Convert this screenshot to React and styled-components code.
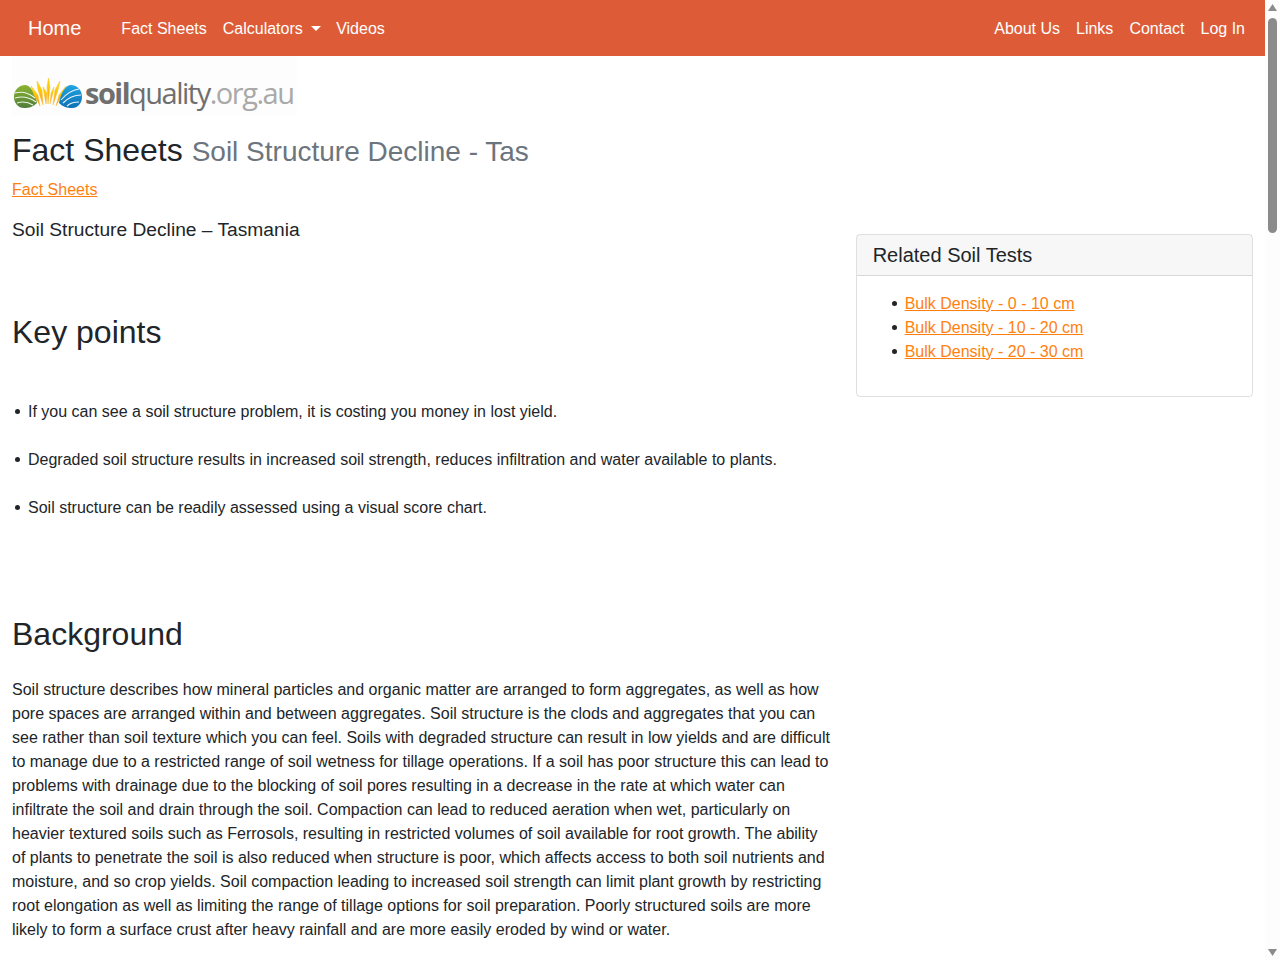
import React from 'react';
import styled, { createGlobalStyle } from 'styled-components';

const Global = createGlobalStyle`
  body {
    margin: 0;
    font-family: "Liberation Sans", Arial, sans-serif;
    font-size: 16px;
    line-height: 24px;
    color: #212529;
    background: #fff;
  }
`;

const Shell = styled.div`
  display: flex;
  height: 100vh;
  overflow: hidden;
`;

const Viewport = styled.div`
  flex: 1;
  min-width: 0;
`;

const ScrollTrack = styled.div`
  flex: 0 0 15px;
  display: flex;
  flex-direction: column;
  align-items: center;
  padding: 4px 0;
  box-sizing: border-box;
  background: #fdfdfd;
`;

const ScrollThumb = styled.div`
  width: 9px;
  height: 215px;
  margin-top: 7px;
  margin-bottom: auto;
  border-radius: 5px;
  background: #8b8b8b;
`;

const Navbar = styled.nav`
  display: flex;
  align-items: center;
  justify-content: space-between;
  height: 56px;
  box-sizing: border-box;
  padding: 8px 12px;
  background: #dd5c37;
`;

const NavGroup = styled.div`
  display: flex;
  align-items: center;
`;

const Brand = styled.a`
  padding: 0 16px;
  margin-right: 16px;
  font-size: 20px;
  line-height: 30px;
  color: #fff;
`;

const NavLink = styled.a`
  padding: 9px 8px 7px;
  color: #fff;
`;

const Caret = styled.span`
  display: inline-block;
  margin-left: 8px;
  margin-right: -0.6px;
  vertical-align: 3px;
  border-top: 5px solid #fff;
  border-left: 5px solid transparent;
  border-right: 5px solid transparent;
`;

const Page = styled.main`
  padding: 0 12px;
`;

const LogoBox = styled.div`
  display: flex;
  align-items: center;
  gap: 3px;
  width: 285px;
  height: 60px;
  padding: 14px 0 0 2px;
  box-sizing: border-box;
  background: #fdfdfd;
`;

const LogoName = styled.span`
  font-family: "Open Sans", sans-serif;
  font-size: 29px;
  line-height: 32px;
  letter-spacing: -1.5px;
  color: #6f6f6f;
`;

const LogoStrong = styled.span`
  font-weight: 700;
`;

const LogoFade = styled.span`
  color: #a9a9a9;
`;

const Title = styled.h2`
  margin: 15px 0 7px;
  font-size: 32px;
  line-height: 38px;
  font-weight: 500;
`;

const TitleSmall = styled.small`
  font-size: 28px;
  font-weight: 400;
  color: #6c757d;
`;

const OrangeLink = styled.a`
  color: #ff7f0f;
  text-decoration: underline;
`;

const Columns = styled.div`
  display: grid;
  grid-template-columns: 819.67px 397.33px;
  gap: 24px;
  margin-top: 16px;
`;

const Lead = styled.p`
  margin: 0;
  font-size: 19.2px;
  line-height: 24px;
`;

const SectionTitle = styled.h2`
  margin: ${(p) => p.$top}px 0 0;
  font-size: 32px;
  line-height: 38px;
  font-weight: 500;
`;

const Bullet = styled.li`
  list-style: none;
  &::before {
    content: "";
    display: inline-block;
    width: 5px;
    height: 5px;
    margin-left: -13px;
    margin-right: 8px;
    vertical-align: 3px;
    border-radius: 50%;
    background: #212529;
  }
`;

const Points = styled.ul`
  margin: 49px 0 0;
  padding: 0 0 0 16px;
`;

const Point = styled(Bullet)`
  margin-bottom: 24px;
`;

const Body = styled.p`
  margin: 25px 0 0;
`;

const Card = styled.aside`
  margin-top: 16px;
  height: 163px;
  box-sizing: border-box;
  border: 1px solid rgba(0, 0, 0, 0.125);
  border-radius: 4px;
`;

const CardHeader = styled.h5`
  margin: 0;
  padding: 8px 16px;
  height: 41px;
  box-sizing: border-box;
  font-size: 20px;
  line-height: 24px;
  font-weight: 500;
  background: rgba(0, 0, 0, 0.03);
  border-bottom: 1px solid rgba(0, 0, 0, 0.125);
`;

const CardList = styled.ul`
  margin: 16px 0 0;
  padding: 0 0 0 48px;
`;

const tests = ['Bulk Density - 0 - 10 cm', 'Bulk Density - 10 - 20 cm', 'Bulk Density - 20 - 30 cm'];

const points = [
  'If you can see a soil structure problem, it is costing you money in lost yield.',
  'Degraded soil structure results in increased soil strength, reduces infiltration and water available to plants.',
  'Soil structure can be readily assessed using a visual score chart.',
];

const rays = [
  'M26 28L20 17L17 8L24 17Z',
  'M29 27L24 12L23 3L28 12Z',
  'M32 26L30 15L29 9L33 15Z',
  'M34 26L33 9L34.5 0L36 9Z',
  'M36 26L37 15L40 9L39 15Z',
  'M39 27L41 12L46 3L44 12Z',
  'M42 28L45 17L52 8L48 17Z',
];

const LogoMark = () => (
  <svg width="68" height="30" viewBox="0 0 68 30">
    <defs>
      <linearGradient id="rayFill" x1="0" y1="0" x2="0" y2="1">
        <stop offset="0.3" stopColor="#fdd000" />
        <stop offset="1" stopColor="#ef8f3a" />
      </linearGradient>
      <linearGradient id="greenFill" x1="0" y1="0" x2="0" y2="1">
        <stop offset="0" stopColor="#8cb52f" />
        <stop offset="1" stopColor="#4f7d3c" />
      </linearGradient>
      <linearGradient id="blueFill" x1="0" y1="0" x2="0" y2="1">
        <stop offset="0" stopColor="#1fa6e3" />
        <stop offset="1" stopColor="#0f6fb4" />
      </linearGradient>
    </defs>
    <path d="M0 19C0 11 6 7 11 7C16 7 21 14 23 25C19 29 15 30 10 30C4 30 0 25 0 19Z" fill="url(#greenFill)" />
    <path d="M1 15C8 13 15 15 21 20M1 20C8 18 15 19 22 24M3 25C9 23 14 24 19 27" stroke="#eef3e6" strokeWidth="1.1" fill="none" />
    {rays.map((d) => <path key={d} d={d} fill="url(#rayFill)" stroke="#fbc02d" strokeWidth="0.5" />)}
    <path d="M68 19C68 11 62 7 57 7C52 7 47 14 45 25C49 29 53 30 58 30C64 30 68 25 68 19Z" fill="url(#blueFill)" />
    <path d="M65 11C58 12 52 16 47 22M67 17C60 17 54 20 49 25M65 24C60 24 56 25 53 28" stroke="#eaf5fb" strokeWidth="1.1" fill="none" />
  </svg>
);

const App = () => {
  return (
    <>
      <Global />
      <Shell>
        <Viewport>
          <Navbar>
            <NavGroup>
              <Brand>Home</Brand>
              <NavLink>Fact Sheets</NavLink>
              <NavLink>Calculators<Caret /></NavLink>
              <NavLink>Videos</NavLink>
            </NavGroup>
            <NavGroup>
              <NavLink>About Us</NavLink>
              <NavLink>Links</NavLink>
              <NavLink>Contact</NavLink>
              <NavLink>Log In</NavLink>
            </NavGroup>
          </Navbar>
          <Page>
            <LogoBox>
              <LogoMark />
              <LogoName><LogoStrong>soil</LogoStrong>quality<LogoFade>.org.au</LogoFade></LogoName>
            </LogoBox>
            <Title>Fact Sheets <TitleSmall>Soil Structure Decline - Tas</TitleSmall></Title>
            <OrangeLink href="#">Fact Sheets</OrangeLink>
            <Columns>
              <div>
                <Lead>Soil Structure Decline – Tasmania</Lead>
                <SectionTitle $top={71}>Key points</SectionTitle>
                <Points>
                  {points.map((p) => <Point key={p}>{p}</Point>)}
                </Points>
                <SectionTitle $top={95}>Background</SectionTitle>
                <Body>
                  Soil structure describes how mineral particles and organic matter are arranged to form aggregates, as well as how pore spaces are arranged within and between aggregates. Soil structure is the clods and aggregates that you can see rather than soil texture which you can feel. Soils with degraded structure can result in low yields and are difficult to manage due to a restricted range of soil wetness for tillage operations. If a soil has poor structure this can lead to problems with drainage due to the blocking of soil pores resulting in a decrease in the rate at which water can infiltrate the soil and drain through the soil. Compaction can lead to reduced aeration when wet, particularly on heavier textured soils such as Ferrosols, resulting in restricted volumes of soil available for root growth. The ability of plants to penetrate the soil is also reduced when structure is poor, which affects access to both soil nutrients and moisture, and so crop yields. Soil compaction leading to increased soil strength can limit plant growth by restricting root elongation as well as limiting the range of tillage options for soil preparation. Poorly structured soils are more likely to form a surface crust after heavy rainfall and are more easily eroded by wind or water.
                </Body>
              </div>
              <Card>
                <CardHeader>Related Soil Tests</CardHeader>
                <CardList>
                  {tests.map((t) => <Bullet key={t}><OrangeLink href="#">{t}</OrangeLink></Bullet>)}
                </CardList>
              </Card>
            </Columns>
          </Page>
        </Viewport>
        <ScrollTrack>
          <svg width="9" height="7" viewBox="0 0 9 7"><path d="M4.5 0L9 7H0Z" fill="#8b8b8b" /></svg>
          <ScrollThumb />
          <svg width="9" height="7" viewBox="0 0 9 7"><path d="M0 0H9L4.5 7Z" fill="#8b8b8b" /></svg>
        </ScrollTrack>
      </Shell>
    </>
  );
};

export default App;
